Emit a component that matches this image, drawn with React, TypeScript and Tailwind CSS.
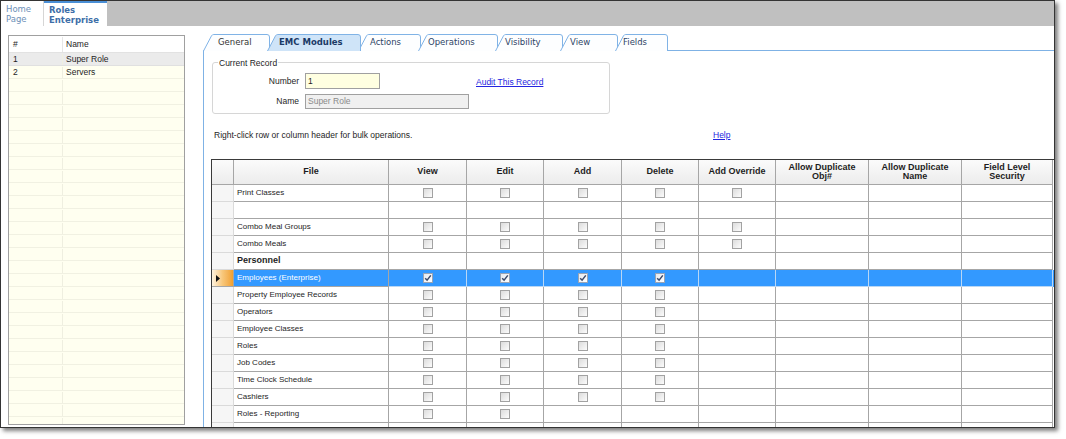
import React from "react";

type Row = { name: string; cb: number[]; bold?: boolean; sel?: boolean };

const rows: Row[] = [
  { name: "Print Classes", cb: [1, 1, 1, 1, 1] },
  { name: "", cb: [] },
  { name: "Combo Meal Groups", cb: [1, 1, 1, 1, 1] },
  { name: "Combo Meals", cb: [1, 1, 1, 1, 1] },
  { name: "Personnel", cb: [], bold: true },
  { name: "Employees (Enterprise)", cb: [2, 2, 2, 2], sel: true },
  { name: "Property Employee Records", cb: [1, 1, 1, 1] },
  { name: "Operators", cb: [1, 1, 1, 1] },
  { name: "Employee Classes", cb: [1, 1, 1, 1] },
  { name: "Roles", cb: [1, 1, 1, 1] },
  { name: "Job Codes", cb: [1, 1, 1, 1] },
  { name: "Time Clock Schedule", cb: [1, 1, 1, 1] },
  { name: "Cashiers", cb: [1, 1, 1, 1] },
  { name: "Roles - Reporting", cb: [1, 1] },
  { name: "", cb: [] },
];

const cols = [
  { label: ["View"], w: "w-[78px]" },
  { label: ["Edit"], w: "w-[77px]" },
  { label: ["Add"], w: "w-[78px]" },
  { label: ["Delete"], w: "w-[77px]" },
  { label: ["Add Override"], w: "w-[77px]" },
  { label: ["Allow Duplicate", "Obj#"], w: "w-[93px]" },
  { label: ["Allow Duplicate", "Name"], w: "w-[93px]" },
  { label: ["Field Level", "Security"], w: "w-[91px]" },
];

const tabs = [
  { label: "General", w: 67, cls: "w-[67px] pl-[15px] text-[#333333]" },
  { label: "EMC Modules", w: 94, cls: "w-[94px] pl-[12px] -ml-[3px] font-bold text-[#1b3a66]", active: true },
  { label: "Actions", w: 63, cls: "w-[63px] pl-[12px] -ml-[3px] text-[#2e4466]" },
  { label: "Operations", w: 80, cls: "w-[80px] pl-[10px] -ml-[3px] text-[#2e4466]" },
  { label: "Visibility", w: 68, cls: "w-[68px] pl-[10px] -ml-[3px] text-[#2e4466]" },
  { label: "View", w: 58, cls: "w-[58px] pl-[10px] -ml-[3px] text-[#2e4466]" },
  { label: "Fields", w: 53, cls: "w-[53px] pl-[8px] -ml-[3px] text-[#2e4466]" },
];

function Check({ state, sel }: { state: number; sel?: boolean }) {
  if (!state) return null;
  return (
    <span
      className={
        "w-[10px] h-[10px] border flex items-center justify-center " +
        (sel
          ? "border-[#9aa4b4] bg-linear-to-br from-[#e6e9ee] to-[#ffffff]"
          : "border-[#a2a2a2] bg-linear-to-br from-[#dcdcdc] to-[#fcfcfc]")
      }
    >
      {state === 2 && (
        <svg width="8" height="8" viewBox="0 0 8 8">
          <path d="M1.2 4.2 L3.1 6.2 L6.8 1.4" fill="none" stroke="#3b4a6b" strokeWidth="1.5" />
        </svg>
      )}
    </span>
  );
}

function Tab({ t }: { t: (typeof tabs)[number] }) {
  const W = t.w;
  const top = `M0.5 17 L8.5 1.8 Q9.3 0.5 10.8 0.5 L${W - 3} 0.5 Q${W - 0.5} 0.5 ${W - 0.5} 3 L${W - 0.5} 17`;
  return (
    <div className={"relative h-[17px] flex items-center shrink-0 " + t.cls + (t.active ? " z-10" : "")}>
      <svg className="absolute inset-0" width={W} height="17" viewBox={`0 0 ${W} 17`}>
        <path d={top + " Z"} fill={t.active ? "#cfe4f8" : "#fdfeff"} />
        <path d={top} fill="none" stroke="#80b3e6" strokeWidth="1" />
      </svg>
      <span className="relative">{t.label}</span>
    </div>
  );
}

export default function App() {
  return (
    <div className="w-[1066px] h-[439px] bg-white overflow-hidden font-['Liberation_Sans',Arial,sans-serif] text-[8.5px] text-[#1e1e1e]">
      <div className="w-[1055px] h-[428px] border border-[#343434] shadow-[3px_3px_4px_rgba(0,0,0,0.5)] bg-white flex flex-col overflow-hidden">
        {/* top document tabs */}
        <div className="h-[25px] flex bg-[#c0c0c0] shrink-0 font-['DejaVu_Sans',Verdana,sans-serif] text-[8.5px] leading-[10px]">
          <div className="w-[43px] bg-white border-r border-[#d6d6d6] pl-[5px] pt-[3px] text-[#6d90b8]">
            Home
            <br />
            Page
          </div>
          <div className="w-[63px] bg-white border-t-2 border-[#4a8fd6] pl-[5px] pt-[2px] font-bold text-[#3d6ea8]">
            Roles
            <br />
            Enterprise
          </div>
        </div>

        <div className="flex flex-1 min-h-0">
          {/* left list */}
          <div className="ml-[7px] mt-[9px] w-[177px] h-[390px] border border-[#a0a0a0] bg-[#fffff0] overflow-hidden flex flex-col shrink-0">
            <div className="h-[17px] pt-[1px] flex bg-white border-b border-[#e2e2e2] shrink-0">
              <div className="w-[54px] pl-[4px] border-r border-[#e6e6e6] flex items-center">#</div>
              <div className="pl-[3px] flex items-center">Name</div>
            </div>
            {["Super Role", "Servers"].concat(Array(28).fill("")).map((n, i) => (
              <div
                key={i}
                className={
                  "h-[13px] pt-[1px] flex shrink-0 border-b " +
                  (i === 0 ? "bg-[#ebebeb] border-[#e0e0e0]" : "border-[#f1f1e2]")
                }
              >
                <div className="w-[54px] pl-[4px] border-r border-[#efefe0] flex items-center">{n ? i + 1 : ""}</div>
                <div className="pl-[3px] flex items-center">{n}</div>
              </div>
            ))}
          </div>

          {/* tab control */}
          <div className="ml-[18px] mt-[8px] flex-1 min-w-0 flex flex-col font-['DejaVu_Sans',Verdana,sans-serif]">
            <div className="h-[16px] flex shrink-0 text-[8.5px]">
              {tabs.map((t) => (
                <Tab key={t.label} t={t} />
              ))}
            </div>
            <div className="flex-1 min-h-0 border-l border-t border-[#7fb2e5] flex flex-col font-['Liberation_Sans',Arial,sans-serif]">
              {/* group box */}
              <div className="ml-[8px] mt-[11px] w-[398px] h-[52px] border border-[#d6d6d6] rounded-[3px] relative shrink-0">
                <span className="absolute left-[5px] -top-[5px] bg-white px-[1px] leading-[10px]">Current Record</span>
                <div className="flex items-center mt-[10px] h-[16px]">
                  <span className="w-[86px] text-right">Number</span>
                  <div className="ml-[6px] w-[75px] h-[16px] border border-[#a0a0a0] bg-[#ffffe1] pl-[2px] flex items-center">1</div>
                  <a className="ml-[96px] mt-[2px] text-[#2424e0] underline">Audit This Record</a>
                </div>
                <div className="flex items-center mt-[5px] h-[15px]">
                  <span className="w-[86px] text-right">Name</span>
                  <div className="ml-[6px] w-[164px] h-[15px] border border-[#a0a0a0] bg-[#f0f0f0] pl-[2px] flex items-center text-[#8a8a8a]">
                    Super Role
                  </div>
                </div>
              </div>

              <div className="flex mt-[16px] h-[10px] leading-[10px] items-center pl-[10px] shrink-0">
                <span className="w-[499px]">Right-click row or column header for bulk operations.</span>
                <a className="text-[#2424e0] underline">Help</a>
              </div>

              {/* data grid */}
              <div className="ml-[7px] mt-[19px] border-l border-t border-[#3a3a3a] flex flex-col">
                <div className="h-[25px] flex shrink-0 font-bold text-[9px] leading-[9.5px]">
                  <div className="w-[22px] border-r border-b border-[#a6a6a6] bg-linear-to-b from-[#fbfbfb] to-[#ececec]" />
                  <div className="w-[155px] border-r border-b border-[#a6a6a6] bg-linear-to-b from-[#fbfbfb] to-[#ececec] flex items-center justify-center">
                    File
                  </div>
                  {cols.map((c) => (
                    <div
                      key={c.label.join()}
                      className={
                        c.w +
                        " shrink-0 border-r border-b border-[#a6a6a6] bg-linear-to-b from-[#fbfbfb] to-[#ececec] flex flex-col items-center justify-center text-center"
                      }
                    >
                      {c.label.map((l) => (
                        <span key={l}>{l}</span>
                      ))}
                    </div>
                  ))}
                </div>
                {rows.map((r, i) => (
                  <div key={i} className={"h-[17px] flex shrink-0 text-[8px] " + (r.sel ? "bg-[#3399ff] text-white" : "")}>
                    <div
                      className={
                        "w-[22px] border-r border-b flex items-center pl-[4px] " +
                        (r.sel
                          ? "border-[#a6a6a6] bg-linear-to-r from-[#fdf3e0] via-[#f8c77a] to-[#f0a02c]"
                          : "border-[#dadada] bg-[#f6f6f6]")
                      }
                    >
                      {r.sel && (
                        <svg width="4" height="7" viewBox="0 0 4 7">
                          <path d="M0 0 L4 3.5 L0 7 Z" fill="#111" />
                        </svg>
                      )}
                    </div>
                    <div
                      className={
                        "w-[155px] border-r border-b border-[#a6a6a6] flex items-center pl-[3px] " +
                        (r.bold ? "font-bold text-[9px]" : "")
                      }
                    >
                      {r.name}
                    </div>
                    {cols.map((c, j) => (
                      <div
                        key={j}
                        className={
                          c.w +
                          " shrink-0 border-r border-b flex items-center justify-center " +
                          (r.sel ? "border-[#b9d7f5]" : "border-[#a6a6a6]")
                        }
                      >
                        <Check state={r.cb[j] || 0} sel={r.sel} />
                      </div>
                    ))}
                  </div>
                ))}
              </div>
            </div>
          </div>
        </div>
      </div>
    </div>
  );
}
